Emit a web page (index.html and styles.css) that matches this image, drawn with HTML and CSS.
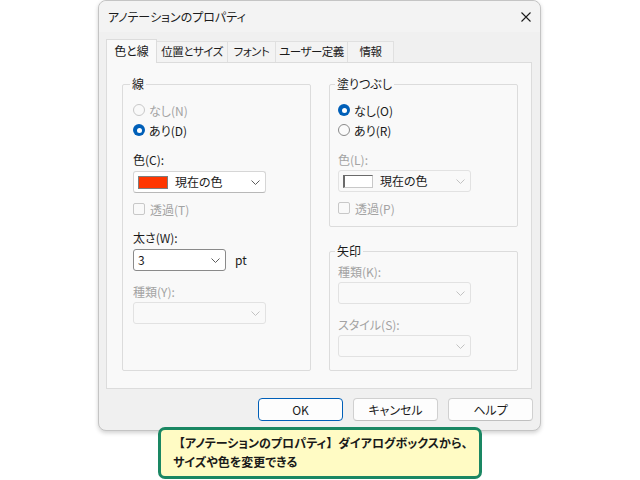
FILE: index.html
```html
<!DOCTYPE html>
<html lang="ja">
<head>
    <meta charset="UTF-8">
    <title>アノテーションのプロパティ</title>
    <link rel="stylesheet" href="styles.css">
</head>
<body>
    <div class="stage">
        <div class="dialog">
            <div class="titlebar">
                <span class="title">アノテーションのプロパティ</span>
                <svg class="close" width="10" height="10" viewBox="0 0 10 10">
                    <path d="M0.5 0.5 L9.5 9.5 M9.5 0.5 L0.5 9.5" stroke="#1b1b1b" stroke-width="1.1" fill="none"/>
                </svg>
            </div>

            <!-- Tabs -->
            <div class="tabs">
                <div class="tab active">色と線</div>
                <div class="tab">位置とサイズ</div>
                <div class="tab">フォント</div>
                <div class="tab">ユーザー定義</div>
                <div class="tab">情報</div>
            </div>

            <div class="panel">
                <!-- Line -->
                <fieldset class="group">
                    <legend>線</legend>
                    <div class="option disabled"><span class="radio"></span>なし(N)</div>
                    <div class="option"><span class="radio checked"></span>あり(D)</div>
                    <div class="label">色(C):</div>
                    <div class="combo">
                        <span class="swatch red"></span>
                        <span class="combo-text">現在の色</span>
                        <svg class="chevron" width="9" height="5" viewBox="0 0 9 5"><path d="M0.5 0.5 L4.5 4.5 L8.5 0.5" stroke="#5c5c5c" fill="none"/></svg>
                    </div>
                    <div class="check disabled"><span class="box"></span>透過(T)</div>
                    <div class="label gap">太さ(W):</div>
                    <div class="width-row">
                        <div class="combo edit">
                            <span class="combo-text">3</span>
                            <svg class="chevron" width="9" height="5" viewBox="0 0 9 5"><path d="M0.5 0.5 L4.5 4.5 L8.5 0.5" stroke="#5c5c5c" fill="none"/></svg>
                        </div>
                        <span class="unit">pt</span>
                    </div>
                    <div class="label gap disabled">種類(Y):</div>
                    <div class="combo off">
                        <svg class="chevron" width="9" height="5" viewBox="0 0 9 5"><path d="M0.5 0.5 L4.5 4.5 L8.5 0.5" stroke="#c2c2c2" fill="none"/></svg>
                    </div>
                </fieldset>

                <div class="column">
                    <!-- Fill -->
                    <fieldset class="group fill">
                        <legend>塗りつぶし</legend>
                        <div class="option"><span class="radio checked"></span>なし(O)</div>
                        <div class="option"><span class="radio"></span>あり(R)</div>
                        <div class="label disabled">色(L):</div>
                        <div class="combo off">
                            <span class="swatch white"></span>
                            <span class="combo-text">現在の色</span>
                            <svg class="chevron" width="9" height="5" viewBox="0 0 9 5"><path d="M0.5 0.5 L4.5 4.5 L8.5 0.5" stroke="#c2c2c2" fill="none"/></svg>
                        </div>
                        <div class="check disabled"><span class="box"></span>透過(P)</div>
                    </fieldset>

                    <!-- Arrow -->
                    <fieldset class="group arrow">
                        <legend>矢印</legend>
                        <div class="label disabled">種類(K):</div>
                        <div class="combo off">
                            <svg class="chevron" width="9" height="5" viewBox="0 0 9 5"><path d="M0.5 0.5 L4.5 4.5 L8.5 0.5" stroke="#c2c2c2" fill="none"/></svg>
                        </div>
                        <div class="label gap disabled">スタイル(S):</div>
                        <div class="combo off">
                            <svg class="chevron" width="9" height="5" viewBox="0 0 9 5"><path d="M0.5 0.5 L4.5 4.5 L8.5 0.5" stroke="#c2c2c2" fill="none"/></svg>
                        </div>
                    </fieldset>
                </div>
            </div>

            <div class="buttons">
                <button class="button default">OK</button>
                <button class="button">キャンセル</button>
                <button class="button">ヘルプ</button>
            </div>
        </div>

        <div class="callout"><span class="bracket">【</span>アノテーションのプロパティ<span class="bracket">】</span>ダイアログボックスから、<br>サイズや色を変更できる</div>
    </div>
</body>
</html>
```

FILE: styles.css
```css
body {
    margin: 0;
    background: #ffffff;
    font-family: "Noto Sans CJK JP", "Liberation Sans", sans-serif;
    font-size: 12px;
    color: #1b1b1b;
    font-feature-settings: "palt";
}
.stage {
    position: relative;
    width: 640px;
    height: 480px;
    overflow: hidden;
}
.dialog {
    box-sizing: border-box;
    width: 443px;
    height: 431px;
    margin-left: 98px;
    background: #f0f0f0;
    border: 1px solid #c4c4c4;
    border-radius: 8px;
    box-shadow: 0 2px 4px rgba(0, 0, 0, 0.18);
    display: flex;
    flex-direction: column;
}
.titlebar {
    height: 31px;
    display: flex;
    align-items: center;
    padding: 0 9px 0 9px;
    background: #f3f3f3;
    border-radius: 8px 8px 0 0;
}
.title {
    line-height: 16px;
}
.close {
    margin-left: auto;
}
.tabs {
    height: 30px;
    display: flex;
    align-items: flex-end;
    margin-left: 7px;
}
.tab {
    box-sizing: border-box;
    height: 21px;
    text-align: center;
    font-size: 11.5px;
    line-height: 19px;
    letter-spacing: -0.5px;
    background: #f3f3f3;
    border: 1px solid #e0e0e0;
    border-bottom: none;
    border-left: none;
}
.tab:nth-child(2) { width: 71px; }
.tab:nth-child(3) { width: 48px; }
.tab:nth-child(4) { width: 72px; }
.tab:nth-child(5) { width: 46px; }
.tab.active {
    width: 51px;
    height: 24px;
    margin-bottom: -1px;
    font-size: 12px;
    line-height: 21px;
    letter-spacing: 0;
    background: #f9f9f9;
    border-left: 1px solid #dcdcdc;
    border-color: #dcdcdc;
    position: relative;
    z-index: 1;
}
.panel {
    box-sizing: border-box;
    height: 327px;
    margin: 0 8px 0 7px;
    padding: 13px 13px 17px 15px;
    background: #f9f9f9;
    border: 1px solid #dcdcdc;
    display: grid;
    grid-template-columns: 189px 189px;
    column-gap: 18px;
}
.group {
    margin: 0;
    padding: 8px 10px 9px 10px;
    border: 1px solid #dcdcdc;
    border-radius: 2px;
    min-width: 0;
}
.group legend {
    margin-left: -3px;
    padding: 0 2px;
    line-height: 16px;
}
.column {
    display: flex;
    flex-direction: column;
}
.column .group {
    padding-left: 8px;
}
.fill {
    padding-bottom: 10px;
}
.arrow {
    flex: 1;
    margin-top: 16px;
    padding-top: 5px;
}
.option {
    height: 20px;
    display: flex;
    align-items: center;
    gap: 4px;
}
.radio {
    box-sizing: border-box;
    width: 12px;
    height: 12px;
    border-radius: 50%;
    border: 1px solid #8a8a8a;
    background: #fbfbfb;
    position: relative;
}
.radio.checked {
    border: none;
    background: #005fb8;
}
.radio.checked::after {
    content: "";
    position: absolute;
    left: 3.5px;
    top: 3.5px;
    width: 5px;
    height: 5px;
    border-radius: 50%;
    background: #ffffff;
}
.disabled {
    color: #a3a3a3;
}
.disabled .radio {
    border-color: #c8c8c8;
    background: transparent;
}
.label {
    margin-top: 12px;
    line-height: 16px;
}
.label.gap {
    margin-top: 13px;
}
.arrow .label:first-of-type {
    margin-top: 0;
}
.combo {
    box-sizing: border-box;
    width: 133px;
    height: 22px;
    margin-top: 3px;
    padding: 0 5px 0 4px;
    display: flex;
    align-items: center;
    background: #ffffff;
    border: 1px solid #d6d6d6;
    border-bottom-color: #b8b8b8;
    border-radius: 3px;
}
.combo.off {
    margin-top: 2px;
    background: #f9f9f9;
    border-color: #e2e2e2;
}
.combo.edit {
    width: 93px;
    border-color: #8a8a8a;
}
.combo-text {
    line-height: 16px;
}
.chevron {
    margin-left: auto;
}
.swatch {
    box-sizing: border-box;
    width: 30px;
    height: 13px;
    margin-right: 7px;
}
.swatch.red {
    background: #ff3600;
    border: 1px solid #7d7d7d;
}
.swatch.white {
    background: #ffffff;
    border: 1px solid #c8c8c8;
    border-top-color: #6a6a6a;
    border-left: 2px solid #6a6a6a;
}
.check {
    margin-top: 8px;
    height: 16px;
    display: flex;
    align-items: center;
    gap: 5px;
}
.box {
    box-sizing: border-box;
    width: 12px;
    height: 12px;
    border: 1px solid #c8c8c8;
    border-radius: 2px;
}
.width-row {
    display: flex;
    align-items: center;
}
.unit {
    margin-left: 9px;
    margin-top: 2px;
}
.buttons {
    display: flex;
    justify-content: flex-end;
    gap: 10px;
    margin: 9px 7px 0 0;
}
.button {
    box-sizing: border-box;
    width: 85px;
    height: 23px;
    padding: 0;
    font-family: inherit;
    font-size: 12px;
    font-feature-settings: "palt";
    color: #1b1b1b;
    background: #fdfdfd;
    border: 1px solid #d0d0d0;
    border-bottom-color: #c0c0c0;
    border-radius: 4px;
}
.button.default {
    border: 1px solid #005fb8;
}
.callout {
    position: absolute;
    left: 158px;
    top: 427px;
    box-sizing: border-box;
    width: 324px;
    height: 52px;
    padding: 3px 0 0 12px;
    background: #fffbc4;
    border: 3px solid #1a8763;
    border-radius: 7px;
    font-size: 12px;
    font-weight: 700;
    line-height: 19px;
    color: #1a1a1a;
}
.bracket {
    font-feature-settings: normal;
}
```
